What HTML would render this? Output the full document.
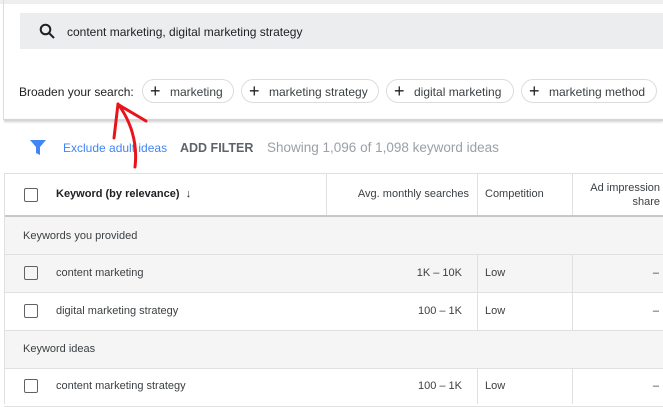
<!DOCTYPE html><html><head><style>
body{margin:0;width:663px;height:404px;overflow:hidden;background:#fff;font-family:"Liberation Sans",sans-serif;position:relative;color:#3c4043}
.a{position:absolute}
.chip{position:absolute;top:79px;height:24px;border:1px solid #dadce0;border-radius:13px;font-size:12px;line-height:24px;color:#3c4043;box-sizing:border-box;padding-left:27px;white-space:nowrap}
.chip:before{content:"+";position:absolute;left:7px;top:-1px;font-size:18px;color:#202124}
.row{position:absolute;left:4px;right:0;border-bottom:1px solid #e0e0e0;font-size:11px;color:#3c4043}
.cb{position:absolute;left:20px;width:12px;height:12px;border:1.5px solid #5f6368;border-radius:2px}
.vl{position:absolute;top:174px;bottom:0;width:1px;background:#e0e0e0}
</style></head><body>
<div class="a" style="left:0;top:0;width:663px;height:4px;background:#eee"></div>
<div class="a" style="left:3px;top:0;width:1px;height:120px;background:#dadce0"></div>
<div class="a" style="left:20px;top:13px;width:643px;height:36px;background:#ebedef"></div>
<svg class="a" style="left:39px;top:23px" width="16" height="16" viewBox="0 0 16 16"><circle cx="6.5" cy="6.5" r="4.8" fill="none" stroke="#202124" stroke-width="2"/><path d="M10 10l5 5" stroke="#202124" stroke-width="2"/></svg>
<div class="a" style="left:67px;top:25px;font-size:12px;color:#202124">content marketing, digital marketing strategy</div>
<div class="a" style="left:19px;top:85px;font-size:12px;color:#202124">Broaden your search:</div>
<div class="chip" style="left:142px;width:92px">marketing</div>
<div class="chip" style="left:241px;width:138px">marketing strategy</div>
<div class="chip" style="left:386px;width:128px">digital marketing</div>
<div class="chip" style="left:521px;width:136px">marketing method</div>
<div class="a" style="left:4px;top:119px;width:659px;height:2px;background:#d5d5d5;box-shadow:0 1px 2px #ccc"></div>
<svg class="a" style="left:30px;top:140px" width="16" height="15" viewBox="0 0 16 15"><path d="M0 0h16L10 7v8L6 13V7z" fill="#4285f4"/></svg>
<div class="a" style="left:63px;top:141px;font-size:12px;color:#4285f4">Exclude adult ideas</div>
<div class="a" style="left:180px;top:141px;font-size:12.5px;font-weight:bold;color:#5f6368">ADD FILTER</div>
<div class="a" style="left:267px;top:140px;font-size:13.5px;color:#9aa0a6">Showing 1,096 of 1,098 keyword ideas</div>
<div class="a" style="left:4px;top:173px;width:659px;height:1px;background:#e0e0e0"></div>
<div class="row" style="top:174px;height:41px;border-bottom:2px solid #c8c8c8"><div class="cb" style="top:14px"></div>
<div class="a" style="left:52px;top:14px;font-weight:bold;color:#202124">Keyword (by relevance) &nbsp;↓</div>
<div class="a" style="right:194px;top:14px">Avg. monthly searches</div>
<div class="a" style="left:481px;top:14px">Competition</div>
<div class="a" style="right:3px;top:7px;text-align:right;line-height:14px">Ad impression<br>share</div></div>
<div class="row" style="top:217px;height:37px;background:#f5f5f5"><div class="a" style="left:19px;top:13px">Keywords you provided</div></div>
<div class="row" style="top:255px;height:37px;background:#f5f5f5"><div class="cb" style="top:11px"></div><div class="a" style="left:52px;top:12px">content marketing</div><div class="a" style="right:201px;top:12px">1K – 10K</div><div class="a" style="left:481px;top:12px">Low</div><div class="a" style="right:4px;top:12px">–</div></div>
<div class="row" style="top:293px;height:37px"><div class="cb" style="top:11px"></div><div class="a" style="left:52px;top:12px">digital marketing strategy</div><div class="a" style="right:201px;top:12px">100 – 1K</div><div class="a" style="left:481px;top:12px">Low</div><div class="a" style="right:4px;top:12px">–</div></div>
<div class="row" style="top:331px;height:37px;background:#f5f5f5"><div class="a" style="left:19px;top:12px">Keyword ideas</div></div>
<div class="row" style="top:369px;height:37px"><div class="cb" style="top:10px"></div><div class="a" style="left:52px;top:11px">content marketing strategy</div><div class="a" style="right:201px;top:11px">100 – 1K</div><div class="a" style="left:481px;top:11px">Low</div><div class="a" style="right:4px;top:11px">–</div></div>
<div class="vl" style="left:326px;height:41px"></div><div class="vl" style="left:477px;height:41px"></div><div class="vl" style="left:572px;height:41px"></div>
<div class="vl" style="left:477px;top:255px;height:75px"></div><div class="vl" style="left:572px;top:255px;height:75px"></div>
<div class="vl" style="left:477px;top:369px"></div><div class="vl" style="left:572px;top:369px"></div>
<div class="a" style="left:4px;top:174px;bottom:0;width:1px;background:#e0e0e0"></div>
<svg class="a" style="left:0;top:0" width="663" height="404"><path d="M118 104C130 120 138 142 135 167M118 104L114 138M119 105L146 121" fill="none" stroke="#e8141b" stroke-width="3" stroke-linecap="round"/></svg>
</body></html>
